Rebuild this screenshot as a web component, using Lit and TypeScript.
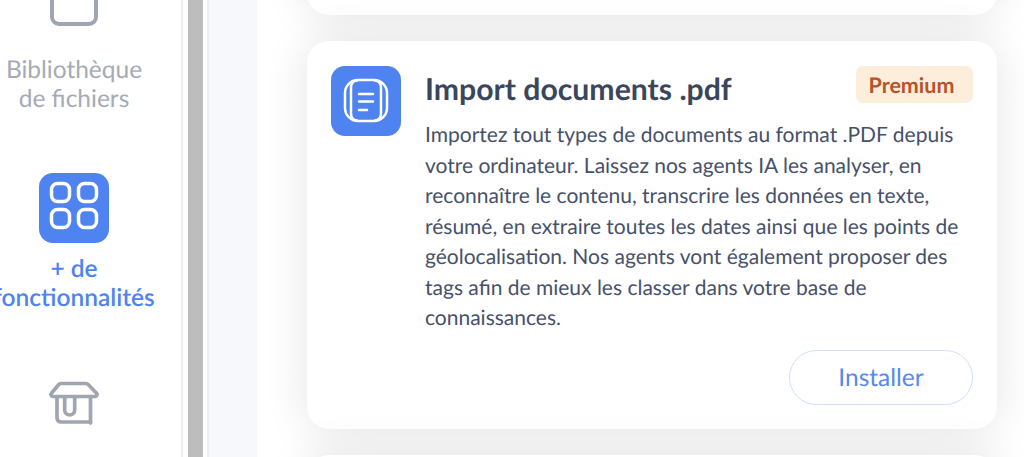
import { LitElement, html, css } from 'lit';
import { customElement } from 'lit/decorators.js';

const DESCRIPTION = `Importez tout types de documents au format .PDF depuis votre ordinateur. Laissez nos agents IA les analyser, en reconnaître le contenu, transcrire les données en texte, résumé, en extraire toutes les dates ainsi que les points de géolocalisation. Nos agents vont également proposer des tags afin de mieux les classer dans votre base de connaissances.`;

@customElement('app-root')
export class AppRoot extends LitElement {
  static styles = css`
    :host {
      display: block;
      height: 457px;
      overflow: hidden;
      font-family: Lato, "Liberation Sans", sans-serif;
      text-rendering: geometricPrecision;
      background: #fff;
    }

    .page {
      display: flex;
      height: 457px;
    }

    /* left nav */
    .sidebar {
      width: 181px;
      flex-shrink: 0;
      background: #fff;
      display: flex;
      flex-direction: column;
      align-items: center;
      overflow: hidden;
      padding-right: 33px;
      box-sizing: border-box;
    }
    .nav-item {
      display: flex;
      flex-direction: column;
      align-items: center;
      flex-shrink: 0;
      width: 200px;
      text-align: center;
      font-size: 24.500px;
      line-height: 29px;
      color: #a5abb6;
    }
    .nav-item.first {
      margin-top: -19px;
    }
    .nav-item.active {
      color: #4f84f0;
      font-weight: 600;
      margin-top: 60px;
    }
    .nav-item.last {
      margin-top: 66px;
    }
    .nav-icon {
      display: block;
      width: 70px;
      height: 70px;
      margin-bottom: 11px;
    }
    .nav-item.first .nav-icon {
      margin-bottom: 4px;
    }
    .tile {
      background: #4f84f0;
      border-radius: 14px;
    }

    .scroll-track {
      width: 28px;
      flex-shrink: 0;
      background: #fff;
      border-left: 2px solid #eeeeee;
      border-right: 2px solid #eeeeee;
      padding-left: 5px;
      box-sizing: border-box;
    }
    .scroll-thumb {
      width: 15px;
      height: 100%;
      background: #bdbdbd;
    }

    .gutter {
      width: 48px;
      flex-shrink: 0;
      background: #f6f8fc;
    }

    .content {
      flex: 1;
      min-width: 0;
      display: flex;
      flex-direction: column;
      gap: 26px;
      margin-top: -100px;
      padding: 0 27px 0 50px;
      background: #fff;
      overflow: hidden;
    }

    .card {
      background: #fff;
      border-radius: 22px;
      box-shadow: 0 0 45px rgba(0, 0, 0, 0.11);
      flex-shrink: 0;
      box-sizing: border-box;
    }
    .card.stub {
      height: 115px;
    }
    .card.main {
      display: flex;
      gap: 24px;
      height: 388px;
      padding: 25px 24px 24px;
    }
    .card-icon {
      display: block;
      flex-shrink: 0;
      width: 70px;
      height: 70px;
    }
    .card-body {
      flex: 1;
      min-width: 0;
      display: flex;
      flex-direction: column;
    }
    .card-head {
      display: flex;
      justify-content: space-between;
      align-items: flex-start;
    }
    h2 {
      margin: 4px 0 0;
      font-size: 30.200px;
      line-height: 38px;
      font-weight: 700;
      color: #3a465c;
    }
    .badge {
      width: 117px;
      height: 37px;
      padding-right: 6px;
      box-sizing: border-box;
      display: flex;
      align-items: center;
      justify-content: center;
      border-radius: 7px;
      background: #fdeedb;
      color: #b9532a;
      font-size: 21.500px;
      font-weight: 700;
    }
    p {
      margin: 12px 0 0;
      font-size: 21px;
      line-height: 30.5px;
      color: #465169;
    }
    .actions {
      display: flex;
      justify-content: flex-end;
      margin-top: 16.500px;
    }
    button {
      width: 184px;
      height: 55px;
      border: 1px solid #d0e0fb;
      border-radius: 28px;
      background: #fff;
      color: #5589f0;
      font: 400 24.500px Lato, "Liberation Sans", sans-serif;
      text-rendering: geometricPrecision;
    }
  `;

  render() {
    return html`
      <div class="page">
        <nav class="sidebar">
          <div class="nav-item first">
            <svg class="nav-icon" viewBox="0 0 70 70" fill="none" stroke="#a0a6b1" stroke-width="4">
              <rect x="13" y="-10" width="44" height="53" rx="7"></rect>
            </svg>
            <span>Bibliothèque<br />de fichiers</span>
          </div>
          <div class="nav-item active">
            <svg class="nav-icon tile" viewBox="0 0 70 70" fill="none" stroke="#fff" stroke-width="3.5">
              <rect x="12.500" y="10.500" width="18" height="18" rx="6"></rect>
              <rect x="39.500" y="10.500" width="18" height="18" rx="6"></rect>
              <rect x="12.500" y="36.500" width="18" height="18" rx="6"></rect>
              <rect x="39.500" y="36.500" width="18" height="18" rx="6"></rect>
            </svg>
            <span>+ de<br />fonctionnalités</span>
          </div>
          <div class="nav-item last">
            <svg class="nav-icon" viewBox="0 0 70 70" fill="none" stroke="#a0a6b1" stroke-width="3.700" stroke-linecap="round" stroke-linejoin="round">
              <path d="M22 5.500h25a3 3 0 0 1 2.200 1L57.300 15a2 2 0 0 1-1.500 3.500H14.200a2 2 0 0 1-1.500-3.500L19.800 6.500a3 3 0 0 1 2.200-1Z"></path>
              <path d="M18 19v21a4 4 0 0 0 4 4h29.500"></path>
              <path d="M51.500 19v26"></path>
              <path d="M25.700 19v13a5 5 0 0 0 10 0V19"></path>
            </svg>
          </div>
        </nav>
        <div class="scroll-track"><div class="scroll-thumb"></div></div>
        <div class="gutter"></div>
        <main class="content">
          <div class="card stub"></div>
          <article class="card main">
            <svg class="card-icon tile" viewBox="0 0 70 70" fill="none" stroke="#fff" stroke-width="2.500" stroke-linecap="round">
              <rect x="14" y="14" width="42" height="41" rx="13"></rect>
              <path d="M26 14.500c-4 .5-6 3-6 7v26c0 4 2 6.500 6 7"></path>
              <path d="M44 14.500c4 .5 6 3 6 7v26c0 4-2 6.500-6 7"></path>
              <path d="M28 28h14M28 35.500h14M28 44h8"></path>
            </svg>
            <div class="card-body">
              <div class="card-head">
                <h2>Import documents .pdf</h2>
                <span class="badge">Premium</span>
              </div>
              <p>${DESCRIPTION}</p>
              <div class="actions"><button>Installer</button></div>
            </div>
          </article>
          <div class="card stub"></div>
        </main>
      </div>
    `;
  }
}
